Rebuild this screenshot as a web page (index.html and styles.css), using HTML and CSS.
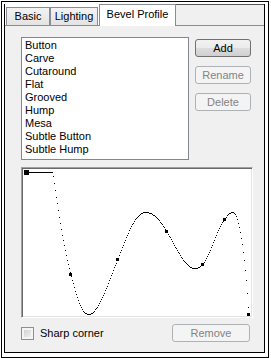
FILE: index.html
```html
<!DOCTYPE html>
<html lang="en">
<head>
	<meta charset="UTF-8">
	<title>Bevel Profile</title>
	<link rel="stylesheet" href="styles.css">
</head>
<body>
	<div class="frame">
		<div class="dialog">
			<div class="tabs">
				<div class="tab tab-basic">Basic</div>
				<div class="tab tab-lighting">Lighting</div>
				<div class="tab tab-active">Bevel Profile</div>
				<div class="tab-rest"></div>
			</div>
			<div class="page">
				<div class="top-row">
					<ul class="listbox">
						<li>Button</li>
						<li>Carve</li>
						<li>Cutaround</li>
						<li>Flat</li>
						<li>Grooved</li>
						<li>Hump</li>
						<li>Mesa</li>
						<li>Subtle Button</li>
						<li>Subtle Hump</li>
					</ul>
					<div class="buttons">
						<button class="btn">Add</button>
						<button class="btn" disabled>Rename</button>
						<button class="btn" disabled>Delete</button>
					</div>
				</div>

				<div class="graph">
					<svg class="curve" width="230" height="149" viewBox="0 0 230 149">
						<g transform="translate(-22,-168)">
							<!-- profile curve, sampled to pixels by script.js -->
							<path id="curve" d="M26,172 H52 C56,200 62,245 70,274 C76,296 80,314 88,314 C98,314 108,280 117,259 C126,236 134,212 145,212 C154,212 160,222 166,231 C176,248 184,268 194,268 C198,268 200,266 202,264 C210,254 216,228 224,219 C227,214 229,212 232,212 C238,212 244,250 248,314" fill="none" stroke="none"/>
							<g id="dots"></g>
							<rect x="24" y="170" width="5" height="5"/>
							<rect x="69" y="273" width="3" height="3"/>
							<rect x="116" y="258" width="3" height="3"/>
							<rect x="165" y="230" width="3" height="3"/>
							<rect x="201" y="263" width="3" height="3"/>
							<rect x="223" y="218" width="3" height="3"/>
							<rect x="247" y="313" width="3" height="3"/>
						</g>
					</svg>
				</div>

				<div class="bottom-row">
					<label class="check"><span class="check-box"></span>Sharp corner</label>
					<button class="btn btn-remove" disabled>Remove</button>
				</div>
			</div>
		</div>
	</div>

	<script src="script.js"></script>
</body>
</html>
```

FILE: styles.css
```css
* {
	margin: 0;
	padding: 0;
	box-sizing: border-box;
	font-family: "Liberation Sans", Arial, sans-serif;
	font-size: 11px;
	color: #000;
}

body {
	background: #fff;
	width: 271px;
	height: 358px;
	overflow: hidden;
}

.frame {
	margin: 1px 0 0 1px;
	width: 268px;
	height: 357px;
	border: 1px solid #000;
	padding: 2px 3px 4px 2px;
}

.dialog {
	height: 100%;
	display: flex;
	flex-direction: column;
	border: 1px solid #000;
	border-top: none;
	background: #fff;
}

/* tab strip */
.tabs {
	display: flex;
	align-items: flex-end;
	height: 21px;
}

.tab {
	height: 18px;
	line-height: 17px;
	text-align: center;
	border: 1px solid #898c95;
	border-bottom: none;
	background: linear-gradient(#f3f3f3, #e3e3e3);
	white-space: nowrap;
}

.tab-basic {
	width: 44px;
	margin-left: 1px;
}

.tab-lighting {
	width: 48px;
}

.tab-active {
	position: relative;
	z-index: 1;
	width: 77px;
	height: 22px;
	line-height: 19px;
	margin-left: 1px;
	margin-bottom: -1px;
	background: #fff;
}

.tab-rest {
	flex: 1;
	align-self: stretch;
	border-top: 1px solid #555;
	background: #f0f0f0;
}

/* tab page */
.page {
	flex: 1;
	border-top: 1px solid #898c95;
	background: #f0f0f0;
	padding: 11px 0 0 16px;
}

.top-row {
	display: flex;
	gap: 6px;
}

.listbox {
	width: 168px;
	height: 123px;
	border: 1px solid #828790;
	background: #fff;
	list-style: none;
	padding: 1px 0 0 3px;
}

.listbox li {
	line-height: 13px;
	white-space: nowrap;
}

.buttons {
	display: flex;
	flex-direction: column;
	gap: 9px;
	padding-top: 2px;
}

.btn {
	width: 56px;
	height: 18px;
	border: 1px solid #707070;
	border-radius: 3px;
	background: linear-gradient(#f2f2f2 0%, #ebebeb 50%, #dddddd 50%, #cfcfcf 100%);
	color: #000;
}

.btn:disabled {
	border-color: #adb2b5;
	background: #f4f4f4;
	color: #838383;
}

.graph {
	margin-top: 7px;
	width: 232px;
	height: 151px;
	border: 1px solid #a0a0a0;
	border-right-color: #fff;
	border-bottom-color: #fff;
	box-shadow: inset 1px 1px #696969, inset -1px -1px #e3e3e3;
	background: #fff;
}

.curve {
	display: block;
	shape-rendering: crispEdges;
}

.curve rect {
	fill: #000;
}

.bottom-row {
	display: flex;
	align-items: center;
	justify-content: space-between;
	width: 229px;
	margin-top: 6px;
}

.check {
	display: flex;
	align-items: center;
	gap: 6px;
}

.check-box {
	width: 13px;
	height: 13px;
	border: 1px solid #8e8f8f;
	background: linear-gradient(135deg, #cbcbcb, #f6f6f6);
	box-shadow: inset 0 0 0 2px #f4f4f4;
}

.btn-remove {
	width: 78px;
}
```

FILE: script.js
```js
// 곡선을 x 한 칸마다 점 하나씩 찍기
const src = document.getElementById("curve");
const dots = document.getElementById("dots");
const ns = "http://www.w3.org/2000/svg";

const total = src.getTotalLength();
const ys = {};

for (let l = 0; l <= total; l += 0.25) {
	const p = src.getPointAtLength(l);
	const x = Math.round(p.x);
	if (!(x in ys)) {
		ys[x] = Math.round(p.y);
	}
}

for (const x in ys) {
	const r = document.createElementNS(ns, "rect");
	r.setAttribute("x", x);
	r.setAttribute("y", ys[x]);
	r.setAttribute("width", 1);
	r.setAttribute("height", 1);
	dots.appendChild(r);
}
```
